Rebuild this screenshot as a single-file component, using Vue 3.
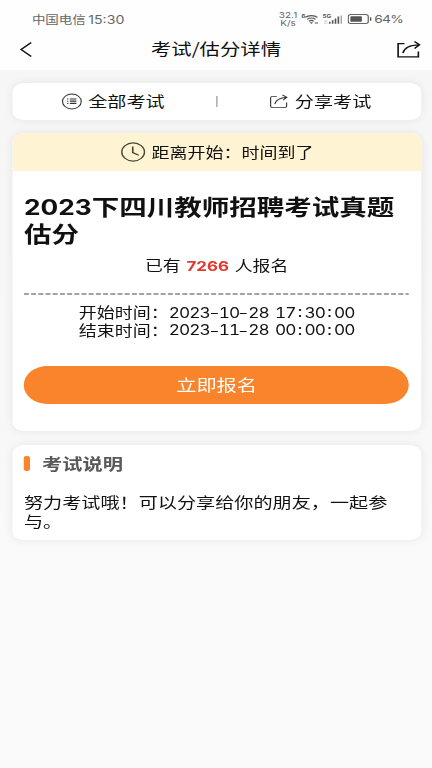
<script setup>
const title = '2023下四川教师招聘考试真题估分'
const digits = title.slice(0, 4)
const rest = title.slice(4)
const times = [
  { label: '开始时间：', value: '2023-10-28 17:30:00' },
  { label: '结束时间：', value: '2023-11-28 00:00:00' },
]
const parts = (value) => value.split(/([-: ])/)
const kind = (part) => (part === '-' ? 'dash' : part === ':' ? 'colon' : part === ' ' ? 'space' : 'num')
</script>

<template>
  <div class="page">
    <header class="top">
      <div class="status">
        <span class="carrier">中国电信 <b>15:30</b></span>
        <div class="indicators">
          <span class="speed"><i>32.1</i><i>K/s</i></span>
          <svg class="wifi" width="14" height="12" viewBox="0 0 14 12" fill="none" stroke="#555" stroke-width="1.2">
            <path d="M3.2 4.4C5.8 1.9 10.4 1.9 13 4.4M4.8 6.4C6.7 4.7 9.5 4.7 11.4 6.4M6.3 8.3C7.4 7.3 8.8 7.3 9.9 8.3" />
            <path d="M6.7 9.3h2.8L8.1 10.9z" fill="#555" stroke="none" />
            <path d="M10.8 10h2.6" stroke-width="1.2" />
            <text x="0" y="5" font-size="5" fill="#555" stroke="none" font-weight="700">6</text>
          </svg>
          <svg class="signal" width="16" height="12" viewBox="0 0 16 12">
            <text x="0" y="4.6" font-size="5" font-weight="700" fill="#555">5G</text>
            <path d="M1 8h3M1 10h3" stroke="#ccc" stroke-width="1" />
            <path d="M5.8 8.7v2M8.1 7.2v3.5M10.4 5.6v5.1M12.7 3.6v7.1" stroke="#555" stroke-width="1.3" />
            <path d="M15 2.4v8.3" stroke="#999" stroke-width="1" />
          </svg>
          <svg class="battery" width="20" height="10" viewBox="0 0 20 10">
            <rect x=".6" y=".6" width="16" height="8.8" rx="2" fill="none" stroke="#666" stroke-width="1" />
            <rect x="2.3" y="2.3" width="9.2" height="5.4" rx=".7" fill="#555" />
            <path d="M18.5 3.2v3.6" stroke="#555" stroke-width="1.1" />
          </svg>
          <span class="percent">64%</span>
        </div>
      </div>
      <nav class="nav">
        <svg class="back" width="12" height="18" viewBox="0 0 12 18" fill="none" stroke="#111" stroke-width="1.3">
          <path d="M10 2.4L1.9 9.5l8.1 7" />
        </svg>
        <h1>考试/估分详情</h1>
        <svg class="share" width="20" height="18" viewBox="0 0 20 18" fill="none" stroke="#111" stroke-width="1.3">
          <path d="M6.6 3.7H1.5v13.1h16.2V11.6" />
          <path d="M5.3 13C6.5 7.9 10.2 5 18.2 4.8M14.6 1.5l4 3.3-4 3.6" />
        </svg>
      </nav>
    </header>

    <main>
      <section class="card actions">
        <a class="action">
          <svg width="17" height="17" viewBox="0 0 17 17" fill="none" stroke="#333">
            <circle cx="8.5" cy="8.5" r="7.5" stroke-width=".9" />
            <path d="M6.9 6h5.2M6.9 8.2h5.2M6.9 10.4h5.2" stroke-width="1.2" />
            <path d="M4.7 6h1M4.7 8.2h1M4.7 10.4h1" stroke-width="1" />
          </svg>
          <span>全部考试</span>
        </a>
        <span class="divider"></span>
        <a class="action">
          <svg width="16" height="15" viewBox="0 0 16 15" fill="none" stroke="#333" stroke-width=".9">
            <path d="M6.5 2.4H3Q1.5 2.4 1.5 3.9v8.2q0 1.5 1.5 1.5h9.8q1.5 0 1.5-1.5V8.4" />
            <path d="M4.8 10.2C5.6 6 8.3 3.8 14.4 3.3M10.9.8l3.6 2.5-3 2.8" />
          </svg>
          <span>分享考试</span>
        </a>
      </section>

      <section class="card exam">
        <div class="countdown">
          <svg width="21" height="20" viewBox="0 0 21 20" fill="none" stroke="#4b4636" stroke-width="1.1">
            <circle cx="10.5" cy="10" r="9.1" />
            <path d="M10.2 4.5v6l4.8 2.7" stroke-width="1.3" />
          </svg>
          <span>距离开始：时间到了</span>
        </div>
        <div class="body">
          <h2><span class="year">{{ digits }}</span>{{ rest }}</h2>
          <p class="count">已有 <strong>7266</strong> 人报名</p>
          <svg class="rule" width="308" height="2" viewBox="0 0 308 2">
            <path d="M0 1h308" stroke="#858585" stroke-width="1.6" stroke-dasharray="4 1.76" />
          </svg>
          <div class="times">
            <p v-for="t in times" :key="t.label">
              <span>{{ t.label }}</span><span v-for="(p, i) in parts(t.value)" :key="i" :class="kind(p)">{{ p }}</span>
            </p>
          </div>
          <button>立即报名</button>
        </div>
      </section>

      <section class="card notes">
        <h3>考试说明</h3>
        <p>努力考试哦！可以分享给你的朋友，一起参与。</p>
      </section>
    </main>
  </div>
</template>

<style>
body {
  background: #fafafa;
  overflow: hidden;
}
</style>

<style scoped>
* {
  box-sizing: border-box;
}
h1, h2, h3, p {
  margin: 0;
  font-weight: 400;
}
svg {
  display: block;
  flex: none;
}
.page {
  width: 345.6px;
  height: 768px;
  transform: scaleX(1.25);
  transform-origin: 0 0;
  background: linear-gradient(#f6f6f6 70px, #f8f8f8 450px, #fafafa 560px);
  color: #111;
  font-family: "Noto Sans CJK SC", sans-serif;
}
.top {
  height: 70px;
  background: #fefefe;
}
.status {
  display: flex;
  justify-content: space-between;
  align-items: center;
  height: 38px;
  padding: 0 23px 0 25.5px;
  color: #666;
}
.carrier {
  font-size: 10.8px;
  white-space: pre;
}
.carrier b {
  margin-left: -0.5px;
  font: 400 11.3px Inter, sans-serif;
}
.indicators {
  display: flex;
  align-items: center;
}
.indicators text {
  font-family: Inter, sans-serif;
}
.speed {
  display: flex;
  flex-direction: column;
  align-items: center;
  font: 8px/8px Inter, sans-serif;
  margin-right: 3px;
}
.speed i {
  font-style: normal;
}
.signal {
  margin-left: 3px;
}
.battery {
  margin-left: 4px;
}
.percent {
  margin-left: 1.6px;
  font: 11px Inter, sans-serif;
  letter-spacing: -0.5px;
}
.nav {
  display: flex;
  align-items: center;
  justify-content: space-between;
  height: 22px;
  padding: 0 8.5px 0 15px;
}
.nav h1 {
  font-size: 16.3px;
  line-height: 20px;
  padding: 0 0 2px 1.5px;
}
main {
  display: flex;
  flex-direction: column;
  gap: 13.5px;
  padding: 13px 8.6px 0 9.6px;
}
.card {
  border-radius: 9px;
  background: #fff;
  box-shadow: 0 0 9px rgba(0, 0, 0, 0.075);
}
.actions {
  display: flex;
  align-items: center;
  height: 36.5px;
}
.action {
  flex: 1;
  display: flex;
  align-items: center;
  justify-content: center;
  gap: 4.5px;
  font-size: 15.3px;
  line-height: 20px;
}
.action:first-child {
  padding-right: 1.6px;
}
.action:last-child {
  padding-left: 1.6px;
}
.action span {
  padding-bottom: 2px;
}
.divider {
  width: 1px;
  height: 11px;
  background: #999;
}
.exam {
  height: 298px;
  overflow: hidden;
}
.countdown {
  display: flex;
  align-items: center;
  justify-content: center;
  gap: 4.5px;
  height: 38px;
  background: #fef4d3;
  font-size: 14.4px;
}
.countdown span {
  padding-bottom: 2px;
}
.body {
  padding: 21px 9.6px 0;
}
h2 {
  font-size: 22px;
  font-weight: 700;
  line-height: 27px;
}
.year {
  font-family: Inter, sans-serif;
  font-size: 21px;
  line-height: 1;
}
.count {
  margin-top: 9px;
  height: 20px;
  text-align: center;
  font-size: 14.3px;
  line-height: 20px;
  word-spacing: 1px;
}
.count strong {
  color: #e03a30;
  font: 700 13.5px/1 Inter, sans-serif;
  margin: 0 0.5px;
}
.rule {
  width: 100%;
  margin-top: 18px;
}
.times {
  margin-top: 8px;
  font-size: 14.4px;
  line-height: 17.5px;
}
.times p {
  display: flex;
  justify-content: center;
  height: 17.5px;
}
.num {
  padding-top: 1.6px;
  font-family: Inter, sans-serif;
  font-size: 13.8px;
  font-variant-numeric: tabular-nums;
  letter-spacing: -0.75px;
}
.dash,
.colon,
.space {
  width: 7.2px;
  text-align: center;
}
.dash {
  transform: scaleX(1.5);
}
.colon {
  margin-top: -1px;
}
.space {
  width: 5px;
}
button {
  display: block;
  width: 100%;
  height: 38px;
  margin-top: 28px;
  padding: 0 0 2px;
  border: 0;
  border-radius: 19px;
  background: #fa842b;
  color: #fff;
  font: 16.2px "Noto Sans CJK SC", sans-serif;
}
.notes {
  height: 95.5px;
  padding: 8px 9.6px 0;
}
h3 {
  display: flex;
  align-items: center;
  gap: 9.5px;
  color: #595959;
  font-size: 16.2px;
  font-weight: 700;
  line-height: 20px;
}
h3::before {
  content: "";
  width: 5px;
  height: 15.5px;
  margin-top: 2px;
  border-radius: 2px;
  background: #fa842b;
}
.notes p {
  margin-top: 19px;
  font-size: 15.3px;
  line-height: 19px;
}
</style>
